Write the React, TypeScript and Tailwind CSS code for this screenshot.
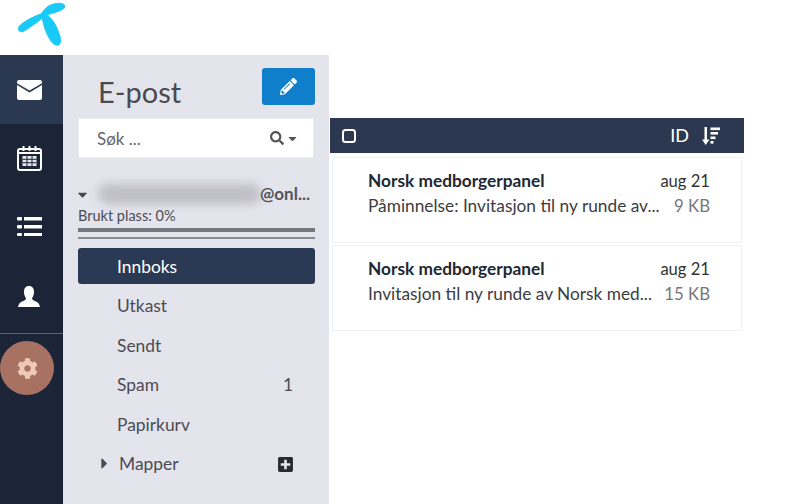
import { FaCog, FaPencilAlt, FaSearch, FaCaretDown, FaCaretRight, FaPlusSquare } from "react-icons/fa";

const font = { fontFamily: "Lato, 'Noto Sans', sans-serif" };

function Logo() {
  return (
    <svg width="70" height="50" viewBox="0 0 70 50">
      <g fill="#19caf7" stroke="#19caf7" strokeWidth="1" strokeLinejoin="round">
        <path d="M65 6 C64 3 58 2.5 52 4.5 C47 6 44 10 41 14 C36 15.5 31 18 26 21 C22 23.5 18 26 18.5 29.5 C19 32 22 32.5 25 30.5 C31 27 37 22 44 17 C46 15.5 49 14 53 13 C58 11.5 65 9.5 65 6 Z" />
        <path d="M42 16 C43 24 46 34 51 41 C53 44 56 46 58.5 45 C61 44 61 39 59.5 35 C57.5 28 54 21 49 16.5 C47 14.5 43 14 42 16 Z" />
      </g>
    </svg>
  );
}

function MailIcon() {
  return (
    <svg width="25" height="20" viewBox="0 0 25 20">
      <path d="M2 0H23a2 2 0 0 1 2 2V3.2L12.5 10.6 0 3.2V2a2 2 0 0 1 2-2Z" fill="#fff" />
      <path d="M0 5 12.5 12.4 25 5V18a2 2 0 0 1-2 2H2a2 2 0 0 1-2-2Z" fill="#fff" />
    </svg>
  );
}

function CalendarIcon() {
  return (
    <svg width="25" height="25" viewBox="0 0 25 25" fill="none">
      <rect x="1" y="3" width="23" height="21" rx="2" stroke="#fff" strokeWidth="2" />
      <path d="M1 7H24" stroke="#fff" strokeWidth="2" />
      <path d="M6.5 0V5M12.5 0V5M18.5 0V5" stroke="#fff" strokeWidth="2" />
      <path d="M5.5 10H19.5V20H5.5Z" fill="#e4e4ea" />
      <path d="M10 10V20M15 10V20M5.5 13.3H19.5M5.5 16.7H19.5" stroke="#1c2537" strokeWidth="1" />
    </svg>
  );
}

function ListIcon() {
  return (
    <svg width="25" height="20" viewBox="0 0 25 20" fill="#fff">
      <rect x="0" y="1" width="5" height="3.5" rx="1" />
      <rect x="7" y="1" width="18" height="3.5" />
      <rect x="0" y="9" width="5" height="3.5" rx="1" />
      <rect x="7" y="9" width="18" height="3.5" />
      <rect x="0" y="17" width="5" height="3" rx="1" />
      <rect x="7" y="17" width="18" height="3" />
    </svg>
  );
}

function UserIcon() {
  return (
    <svg width="22" height="21" viewBox="0 0 22 21" fill="#fff">
      <path d="M11 0C14.5 0 16 2.6 16 6 C16 8.8 15 11 14 12.2 C14 13.8 15.5 14.3 17.5 15.2 C20 16.3 21.5 17.8 22 21 H0 C0.5 17.8 2 16.3 4.5 15.2 C6.5 14.3 8 13.8 8 12.2 C7 11 6 8.8 6 6 C6 2.6 7.5 0 11 0 Z" />
    </svg>
  );
}

function CheckIcon() {
  return (
    <svg width="14" height="14" viewBox="0 0 14 14" fill="none">
      <rect x="1" y="1" width="12" height="12" rx="2.5" stroke="#fff" strokeWidth="2" />
    </svg>
  );
}

function SortIcon() {
  return (
    <svg width="18" height="18" viewBox="0 0 18 18" fill="#fff">
      <path d="M2.5 0H5V12.5H7.5L3.75 18 0 12.5H2.5Z" />
      <rect x="8.5" y="0.5" width="9.5" height="2.6" />
      <rect x="8.5" y="5" width="7.5" height="2.6" />
      <rect x="8.5" y="9.5" width="5" height="2.6" />
      <rect x="8.5" y="14" width="3" height="2.6" />
    </svg>
  );
}

function Rail() {
  return (
    <div className="w-[63px] shrink-0 h-[449px] bg-[#1c2537] flex flex-col items-stretch text-white">
      <div className="h-[69px] pr-[5px] bg-[#2a3950] flex items-center justify-center"><MailIcon /></div>
      <div className="h-[68px] pr-[5px] flex items-center justify-center"><CalendarIcon /></div>
      <div className="h-[68px] pr-[5px] flex items-center justify-center"><ListIcon /></div>
      <div className="h-[72px] pr-[5px] flex items-center justify-center"><UserIcon /></div>
      <div className="h-[1px] mt-[1px] bg-[#5a6474]" />
      <div className="mt-[7px] w-[54px] h-[54px] rounded-full bg-[#a87263] flex items-center justify-center text-[#f0c8b8]"><FaCog size={21} /></div>
    </div>
  );
}

function Folder({ name, count, active }: { name: string; count?: string; active?: boolean }) {
  return (
    <div className={`h-[36px] mb-[3.5px] pt-[2px] pl-[39px] pr-[22px] flex items-center justify-between text-[17.4px] rounded-[3px] ${active ? "bg-[#2b3a54] text-white" : "text-[#4c4c54]"}`}>
      <span>{name}</span>
      {count && <span>{count}</span>}
    </div>
  );
}

function Panel() {
  return (
    <div className="w-[266px] shrink-0 h-[449px] bg-[#e4e4ec] pl-[15px] pr-[14px]">
      <div className="h-[63px] pt-[13px] flex justify-between">
        <span className="ml-[20px] mt-[6px] text-[29px] leading-[36px] text-[#4a4a50]">E-post</span>
        <div className="w-[53px] h-[37px] rounded-[3px] bg-[#0f7ecb] flex items-center justify-center text-white"><FaPencilAlt size={17} /></div>
      </div>
      <div className="h-[40px] w-[236px] bg-white border border-[#ebebf0] pl-[18px] pr-[14px] flex items-center justify-between">
        <span className="pt-[2px] text-[17px] text-[#666]">Søk ...</span>
        <span className="flex items-center gap-[2px] text-[#555]"><FaSearch size={14} /><FaCaretDown size={13} /></span>
      </div>
      <div className="h-[24px] mt-[24px] flex items-center relative text-[#4a4a50]">
        <FaCaretDown size={15} className="-ml-[3px]" />
        <div className="ml-[8px] w-[163px] h-[20px] rounded-full bg-[#bfbec6] blur-[5px]" />
        <span className="absolute left-[182px] top-[1px] text-[17px] font-bold leading-[22px] text-[#55555c]">@onl...</span>
      </div>
      <div className="mt-[1px] text-[14.5px] leading-[17px] text-[#4c4c54]">Brukt plass: 0%</div>
      <div className="mt-[4px] h-[4px] bg-[#77777c]" />
      <div className="mt-[5px] h-[2px] bg-[#8a8a90]" />
      <div className="mt-[9px]">
        <Folder name="Innboks" active />
        <Folder name="Utkast" />
        <Folder name="Sendt" />
        <Folder name="Spam" count="1" />
        <Folder name="Papirkurv" />
      </div>
      <div className="h-[36px] mt-[4px] flex items-center justify-between pl-[18px] pr-[21px] text-[17.4px] text-[#4c4c54]">
        <span className="flex items-center"><FaCaretRight size={17} className="mr-[6px]" />Mapper</span>
        <FaPlusSquare size={17} className="text-[#2a2a30]" />
      </div>
    </div>
  );
}

function Mail({ subject, size }: { subject: string; size: string }) {
  return (
    <div className="h-[86px] border border-[#eef0f4] pl-[35px] pr-[31px] pt-[11px]">
      <div className="flex justify-between text-[17.3px] leading-[24px]">
        <span className="font-bold text-[#222830]">Norsk medborgerpanel</span>
        <span className="text-[16.6px] text-[#333]">aug 21</span>
      </div>
      <div className="flex justify-between text-[17.3px] leading-[26px]">
        <span className="text-[#3c3c42]">{subject}</span>
        <span className="text-[16.8px] text-[#77777c]">{size}</span>
      </div>
    </div>
  );
}

function Main() {
  return (
    <div className="w-[414px] ml-px pt-[63px]">
      <div className="h-[35px] bg-[#2b3850] flex items-center justify-between pl-[12px] pr-[24px] text-white">
        <CheckIcon />
        <span className="flex items-center gap-[13px] text-[18px]">ID<SortIcon /></span>
      </div>
      <div className="mt-[4px] mx-[2px]">
        <Mail subject="Påminnelse: Invitasjon til ny runde av..." size="9 KB" />
        <div className="h-[2px]" />
        <Mail subject="Invitasjon til ny runde av Norsk med..." size="15 KB" />
      </div>
    </div>
  );
}

export default function App() {
  return (
    <div style={font} className="w-[800px] h-[504px] bg-white overflow-hidden">
      <div className="h-[55px]"><Logo /></div>
      <div className="flex">
        <Rail />
        <Panel />
        <Main />
      </div>
    </div>
  );
}
